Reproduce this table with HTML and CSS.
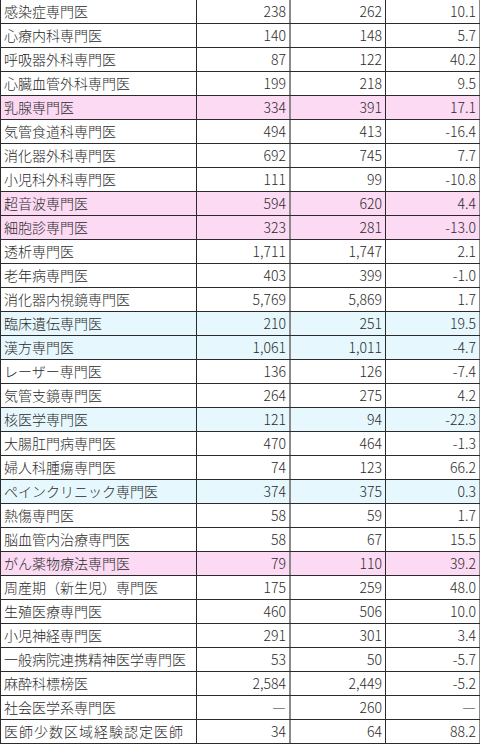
FILE: index.html
```html
<!DOCTYPE html>
<html lang="ja">
<head>
<meta charset="utf-8">
<link rel="stylesheet" href="styles.css">
</head>
<body>
<div class="sheet">
  <div class="row"><div class="c name">感染症専門医</div><div class="c num">238</div><div class="c num mid">262</div><div class="c num">10.1</div></div>
  <div class="row"><div class="c name">心療内科専門医</div><div class="c num">140</div><div class="c num mid">148</div><div class="c num">5.7</div></div>
  <div class="row"><div class="c name">呼吸器外科専門医</div><div class="c num">87</div><div class="c num mid">122</div><div class="c num">40.2</div></div>
  <div class="row"><div class="c name">心臓血管外科専門医</div><div class="c num">199</div><div class="c num mid">218</div><div class="c num">9.5</div></div>
  <div class="row pink"><div class="c name">乳腺専門医</div><div class="c num">334</div><div class="c num mid">391</div><div class="c num">17.1</div></div>
  <div class="row"><div class="c name">気管食道科専門医</div><div class="c num">494</div><div class="c num mid">413</div><div class="c num">-16.4</div></div>
  <div class="row"><div class="c name">消化器外科専門医</div><div class="c num">692</div><div class="c num mid">745</div><div class="c num">7.7</div></div>
  <div class="row"><div class="c name">小児科外科専門医</div><div class="c num">111</div><div class="c num mid">99</div><div class="c num">-10.8</div></div>
  <div class="row pink"><div class="c name">超音波専門医</div><div class="c num">594</div><div class="c num mid">620</div><div class="c num">4.4</div></div>
  <div class="row pink"><div class="c name">細胞診専門医</div><div class="c num">323</div><div class="c num mid">281</div><div class="c num">-13.0</div></div>
  <div class="row"><div class="c name">透析専門医</div><div class="c num">1,711</div><div class="c num mid">1,747</div><div class="c num">2.1</div></div>
  <div class="row"><div class="c name">老年病専門医</div><div class="c num">403</div><div class="c num mid">399</div><div class="c num">-1.0</div></div>
  <div class="row"><div class="c name">消化器内視鏡専門医</div><div class="c num">5,769</div><div class="c num mid">5,869</div><div class="c num">1.7</div></div>
  <div class="row blue"><div class="c name">臨床遺伝専門医</div><div class="c num">210</div><div class="c num mid">251</div><div class="c num">19.5</div></div>
  <div class="row blue"><div class="c name">漢方専門医</div><div class="c num">1,061</div><div class="c num mid">1,011</div><div class="c num">-4.7</div></div>
  <div class="row"><div class="c name">レーザー専門医</div><div class="c num">136</div><div class="c num mid">126</div><div class="c num">-7.4</div></div>
  <div class="row"><div class="c name">気管支鏡専門医</div><div class="c num">264</div><div class="c num mid">275</div><div class="c num">4.2</div></div>
  <div class="row blue"><div class="c name">核医学専門医</div><div class="c num">121</div><div class="c num mid">94</div><div class="c num">-22.3</div></div>
  <div class="row"><div class="c name">大腸肛門病専門医</div><div class="c num">470</div><div class="c num mid">464</div><div class="c num">-1.3</div></div>
  <div class="row"><div class="c name">婦人科腫瘍専門医</div><div class="c num">74</div><div class="c num mid">123</div><div class="c num">66.2</div></div>
  <div class="row blue"><div class="c name">ペインクリニック専門医</div><div class="c num">374</div><div class="c num mid">375</div><div class="c num">0.3</div></div>
  <div class="row"><div class="c name">熱傷専門医</div><div class="c num">58</div><div class="c num mid">59</div><div class="c num">1.7</div></div>
  <div class="row"><div class="c name">脳血管内治療専門医</div><div class="c num">58</div><div class="c num mid">67</div><div class="c num">15.5</div></div>
  <div class="row pink"><div class="c name">がん薬物療法専門医</div><div class="c num">79</div><div class="c num mid">110</div><div class="c num">39.2</div></div>
  <div class="row"><div class="c name">周産期（新生児）専門医</div><div class="c num">175</div><div class="c num mid">259</div><div class="c num">48.0</div></div>
  <div class="row"><div class="c name">生殖医療専門医</div><div class="c num">460</div><div class="c num mid">506</div><div class="c num">10.0</div></div>
  <div class="row"><div class="c name">小児神経専門医</div><div class="c num">291</div><div class="c num mid">301</div><div class="c num">3.4</div></div>
  <div class="row"><div class="c name">一般病院連携精神医学専門医</div><div class="c num">53</div><div class="c num mid">50</div><div class="c num">-5.7</div></div>
  <div class="row"><div class="c name">麻酔科標榜医</div><div class="c num">2,584</div><div class="c num mid">2,449</div><div class="c num">-5.2</div></div>
  <div class="row"><div class="c name">社会医学系専門医</div><div class="c num">―</div><div class="c num mid">260</div><div class="c num">―</div></div>
  <div class="row"><div class="c name wide">医師少数区域経験認定医師</div><div class="c num">34</div><div class="c num mid">64</div><div class="c num">88.2</div></div>
</div>
</body>
</html>
```
FILE: styles.css
```css
html, body {
  margin: 0;
  padding: 0;
  background: #ffffff;
}

.sheet {
  width: 480px;
  font-family: "Noto Sans CJK JP", "Noto Sans", sans-serif;
  font-size: 14px;
  font-weight: 300;
  color: #2a2a2a;
}

.row {
  display: grid;
  grid-template-columns: 196px 93px 96px 95px;
  height: 24px;
  box-sizing: border-box;
  border-bottom: 1px solid #2b2b2b;
}

.row.pink {
  background: #fcdaf4;
}

.row.blue {
  background: #e6f8fd;
}

.c {
  box-sizing: border-box;
  line-height: 23px;
  white-space: nowrap;
  overflow: hidden;
  border-left: 1px solid #2b2b2b;
}

.c:last-child {
  border-right: 1px solid #8a8a8a;
}

.name {
  padding-left: 3px;
}

.name.wide {
  letter-spacing: 1px;
}

.num {
  text-align: right;
  padding-right: 3px;
}

.mid {
  border-left: 2px solid #8a8a8a;
}
```
